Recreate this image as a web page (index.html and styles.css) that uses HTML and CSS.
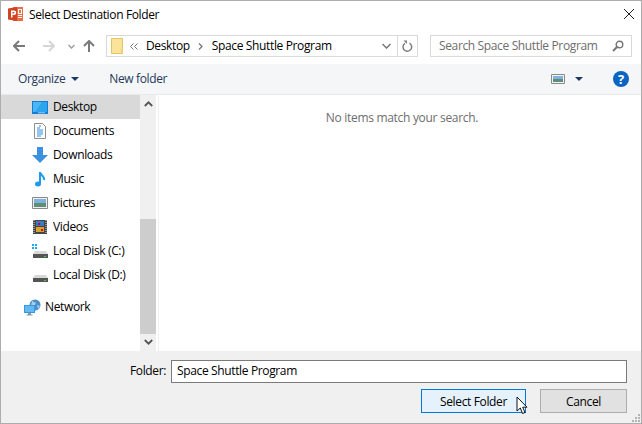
FILE: index.html
```html
<!DOCTYPE html>
<html lang="en">
<head>
<meta charset="utf-8">
<title>Select Destination Folder</title>
<link rel="stylesheet" href="styles.css">
</head>
<body>
<div class="window">
  <header class="titlebar">
    <svg class="app-icon" width="16" height="16" viewBox="0 0 16 16"><path fill="#ed6c47" d="M5 1h10v14H5z"/><path fill="#fff" d="M10 3h4v5h-4zM10 9h4v1h-4zM10 11h4v1h-4z"/><path fill="#ed6c47" d="M11 4h2v3h-2z"/><path fill="#d04423" d="M0 2.500 9 1v14L0 13.500z"/><path fill="#fff" d="M3 4.500h3a2 2 0 0 1 0 4.500H4.500v2.500H3zM4.500 6v1.600H5.600a.8.8 0 0 0 0-1.600z"/></svg>
    <span class="title-text">Select Destination Folder</span>
    <svg class="close" width="10" height="10" viewBox="0 0 10 10"><path d="M0 0l10 10M10 0L0 10" stroke="#222" stroke-width="1" fill="none"/></svg>
  </header>
  <nav class="navbar">
    <div class="nav-buttons">
      <svg width="12" height="12" viewBox="0 0 12 12" class="nav-back"><path d="M6 1L1 6l5 5M1 6h11" stroke="#7a7a7a" stroke-width="2" fill="none"/></svg>
      <svg width="12" height="12" viewBox="0 0 12 12" class="nav-fwd"><path d="M6 1l5 5-5 5M11 6H0" stroke="#d6d6d6" stroke-width="2" fill="none"/></svg>
      <svg width="7" height="5" viewBox="0 0 7 5" class="nav-drop"><path d="M.5 1l3 3 3-3" stroke="#a0a0a0" stroke-width="1.500" fill="none"/></svg>
      <svg width="12" height="12" viewBox="0 0 12 12" class="nav-up"><path d="M1 6l5-5 5 5M6 1v11" stroke="#7a7a7a" stroke-width="2" fill="none"/></svg>
    </div>
    <div class="address">
      <svg class="addr-folder" width="13" height="16" viewBox="0 0 13 16"><path fill="#fbe49a" stroke="#e3c465" d="M.5.500h11v15H.5z"/><path fill="#f2cf6f" d="M10 11h2v4h-2z"/></svg>
      <svg class="crumb-more" width="8" height="7" viewBox="0 0 8 7"><path d="M3.500.5l-3 3 3 3M7.500.5l-3 3 3 3" stroke="#777" stroke-width="1" fill="none"/></svg>
      <span class="crumb">Desktop</span>
      <svg class="crumb-sep" width="5" height="7" viewBox="0 0 5 7"><path d="M1 .5l3 3-3 3" stroke="#777" stroke-width="1.300" fill="none"/></svg>
      <span class="crumb">Space Shuttle Program</span>
      <svg class="addr-drop" width="9" height="6" viewBox="0 0 9 6"><path d="M.5 1l4 4 4-4" stroke="#777" stroke-width="1.500" fill="none"/></svg>
      <span class="addr-refresh">
        <svg width="11" height="12" viewBox="0 0 11 12"><path d="M7.500 3.200A4.300 4.300 0 1 1 3 3.300" stroke="#7d7d7d" stroke-width="1.500" fill="none"/><path d="M1.500 .5h3.500v3.500z" fill="#7d7d7d"/></svg>
      </span>
    </div>
    <div class="search">
      <span class="search-text">Search Space Shuttle Program</span>
      <svg width="12" height="12" viewBox="0 0 12 12"><circle cx="7.500" cy="4.500" r="3.300" stroke="#777" stroke-width="1.400" fill="none"/><path d="M5 7l-4 4" stroke="#777" stroke-width="2" fill="none"/></svg>
    </div>
  </nav>
  <div class="toolbar">
    <span class="tool organize">Organize</span>
    <svg class="tool-caret" width="8" height="4" viewBox="0 0 8 4"><path d="M0 0h8L4 4z" fill="#1e395b"/></svg>
    <span class="tool newfolder">New folder</span>
    <svg class="view-icon" width="14" height="10" viewBox="0 0 14 10"><path fill="#f4f4f4" stroke="#8a8a8a" d="M.5.500h13v9H.5z"/><path fill="#7fb2dc" d="M2 2h10v3H2z"/><path fill="#5f8d78" d="M2 5h10v3H2z"/></svg>
    <svg class="view-caret" width="8" height="4" viewBox="0 0 8 4"><path d="M0 0h8L4 4z" fill="#1e395b"/></svg>
    <span class="help">?</span>
  </div>
  <main class="main">
    <aside class="tree">
      <div class="tree-row selected">
        <svg width="16" height="13" viewBox="0 0 16 13"><path fill="#0f7fd8" d="M0 0h16v13H0z"/><path fill="#2da4f0" d="M1 1h14v10H1z"/><path fill="#4cb6f5" d="M1 1h9L3 11H1z"/><path fill="#e8f4fd" d="M6 11.500h7v.7H6z"/></svg>
        <span>Desktop</span>
      </div>
      <div class="tree-row">
        <svg width="16" height="16" viewBox="0 0 16 16"><path fill="#fdfdfd" stroke="#8f8f8f" d="M2.500.5h8l3 3v12h-11z"/><path stroke="#2f8fe0" d="M7 3h2M5 5h3M5 7h6M5 9h6M5 11h6M5 13h4" fill="none"/></svg>
        <span>Documents</span>
      </div>
      <div class="tree-row">
        <svg width="16" height="16" viewBox="0 0 16 16"><path fill="#3d8fe0" d="M5 0h6v8h5l-8 8-8-8h5z"/></svg>
        <span>Downloads</span>
      </div>
      <div class="tree-row">
        <svg width="16" height="16" viewBox="0 0 16 16"><ellipse cx="6" cy="13" rx="3" ry="2.500" fill="#1f9bee"/><path d="M8 13V1c0 3 5 4 4 8" stroke="#1f9bee" stroke-width="2" fill="none"/></svg>
        <span>Music</span>
      </div>
      <div class="tree-row">
        <svg width="16" height="12" viewBox="0 0 16 12"><path fill="#eee" stroke="#8a8a8a" d="M.5.500h15v11H.5z"/><path fill="#7fb2dc" d="M2 2h12v4H2z"/><path fill="#5f8d78" d="M2 6h12v4H2z"/></svg>
        <span>Pictures</span>
      </div>
      <div class="tree-row">
        <svg width="16" height="16" viewBox="0 0 16 16"><path fill="#444" d="M1 1h14v14H1z"/><path fill="#3a78c8" d="M4 2h8v5H4z"/><path fill="#d8a528" d="M4 8h8v5H4z"/><path fill="#c03" d="M6 4h2v2H6zM9 10h2v2H9z"/><path stroke="#ddd" stroke-dasharray="1 1" d="M2 1v14M14 1v14" fill="none"/></svg>
        <span>Videos</span>
      </div>
      <div class="tree-row">
        <svg width="16" height="16" viewBox="0 0 16 16"><path fill="#1fa9ee" d="M0 1h2v2H0zM3 1h2v2H3zM0 4h2v2H0zM3 4h2v2H3z"/><path fill="#d8d8d8" d="M3 8h11l2 3H1z"/><path fill="#555" d="M1 11h15v4H1z"/><path fill="#3fd04c" d="M12 13h2v1h-2z"/></svg>
        <span>Local Disk (C:)</span>
      </div>
      <div class="tree-row">
        <svg width="16" height="16" viewBox="0 0 16 16"><path fill="#d8d8d8" d="M3 8h11l2 3H1z"/><path fill="#555" d="M1 11h15v4H1z"/><path fill="#3fd04c" d="M12 13h2v1h-2z"/></svg>
        <span>Local Disk (D:)</span>
      </div>
      <div class="tree-row network">
        <svg width="17" height="17" viewBox="0 0 17 17"><circle cx="11" cy="6" r="5.500" fill="#4d8ec7"/><path d="M8 2l4 2-2 4-3-1zM13 6l3 1-2 3z" fill="#a7cde8"/><path fill="#2e9be6" d="M0 6h11v8H0z"/><path fill="#9fd6f7" d="M1 7h9v6H1z" opacity=".5"/><path fill="#8a9aa5" d="M4 14h3v1.500H4zM2.500 15.500h6v1h-6z"/></svg>
        <span>Network</span>
      </div>
    </aside>
    <div class="scrollbar">
      <svg class="scroll-up" width="9" height="6" viewBox="0 0 9 6"><path d="M.8 5l3.700-3.700L8.200 5" stroke="#555" stroke-width="1.800" fill="none"/></svg>
      <div class="scroll-gap"></div>
      <div class="scroll-thumb"></div>
      <svg class="scroll-down" width="9" height="6" viewBox="0 0 9 6"><path d="M.8 1l3.700 3.700L8.200 1" stroke="#555" stroke-width="1.800" fill="none"/></svg>
    </div>
    <section class="list">No items match your search.</section>
  </main>
  <footer class="footer">
    <div class="folder-row">
      <label class="folder-label" for="folder">Folder:</label>
      <input class="folder-input" id="folder" type="text" value="Space Shuttle Program">
    </div>
    <div class="button-row">
      <button class="btn primary" type="button">Select Folder</button>
      <button class="btn secondary" type="button">Cancel</button>
    </div>
    <svg class="cursor" width="13" height="20" viewBox="0 0 13 20"><path d="M1 1v14l3.300-3 2.200 5.500 2.500-1-2.300-5.300H11z" fill="#fff" stroke="#111" stroke-width="1"/></svg>
    <svg class="grip" width="8" height="8" viewBox="0 0 8 8"><path fill="#b4b4b4" d="M6 0h2v2H6zM3 3h2v2H3zM6 3h2v2H6zM0 6h2v2H0zM3 6h2v2H3zM6 6h2v2H6z"/></svg>
  </footer>
</div>
</body>
</html>
```

FILE: styles.css
```css
* { box-sizing: border-box; }
html, body { margin: 0; padding: 0; }
body { width: 642px; height: 424px; overflow: hidden; font-family: "Open Sans", "Noto Sans", sans-serif; font-size: 12px; letter-spacing: -0.36px; color: #000; background: #fff; }

.window { width: 642px; height: 424px; border: 1px solid #adadad; display: flex; flex-direction: column; position: relative; background: #fff; }

.titlebar { height: 34px; display: flex; align-items: center; padding: 0 7px; flex: none; }
.app-icon { margin-right: 5px; margin-top: -8px; }
.title-text { margin-top: -8px; }
.close { margin-left: auto; margin-top: -8px; margin-right: 0; }

.navbar { height: 29px; flex: none; display: flex; align-items: flex-start; }
.nav-buttons { width: 105px; height: 22px; display: flex; align-items: center; flex: none; }
.nav-back { margin-left: 12px; }
.nav-fwd { margin-left: 18px; }
.nav-drop { margin-left: 13px; }
.nav-up { margin-left: 8px; }

.address { width: 312px; height: 22px; border: 1px solid #d9d9d9; display: flex; align-items: center; flex: none; }
.addr-folder { margin-left: 4px; }
.crumb-more { margin-left: 6px; margin-right: 8px; }
.crumb { margin-top: -2px; }
.crumb-sep { margin: 0 9px 0 8px; }
.addr-drop { margin-left: auto; margin-right: 6px; }
.addr-refresh { width: 20px; height: 20px; border-left: 1px solid #d9d9d9; display: flex; align-items: center; justify-content: center; }

.search { width: 202px; height: 22px; margin-left: 12px; border: 1px solid #d9d9d9; display: flex; align-items: center; justify-content: space-between; padding: 0 7px 0 8px; color: #6d6d6d; flex: none; }
.search-text { margin-top: -2px; }

.toolbar { height: 31px; flex: none; display: flex; align-items: center; background: #f5f6f7; border-bottom: 1px solid #e8e9ea; color: #1e395b; }
.tool { margin-top: -2px; }
.organize { margin-left: 17px; }
.tool-caret { margin-left: 6px; }
.newfolder { margin-left: 30px; }
.view-icon { margin-left: auto; }
.view-caret { margin-left: 10px; }
.help { width: 16px; height: 16px; border-radius: 50%; background: #0a64c2; color: #fff; font-weight: 700; font-size: 13px; line-height: 16px; text-align: center; margin-left: 30px; margin-right: 12px; letter-spacing: 0; }

.main { height: 256px; flex: none; display: flex; background: #fff; }
.tree { width: 139px; flex: none; }
.tree-row { height: 24px; display: flex; align-items: center; padding-left: 31px; position: relative; }
.tree-row svg { flex: none; }
.tree-row span { position: absolute; left: 52px; margin-top: -2px; }
.tree-row.selected { background: #d9d9d9; }
.tree-row.network { margin-top: 8px; padding-left: 23px; }
.tree-row.network span { left: 44px; }

.scrollbar { width: 16px; flex: none; background: #f0f0f0; display: flex; flex-direction: column; align-items: center; }
.scroll-up { margin-top: 6px; margin-bottom: 0; flex: none; }
.scroll-gap { height: 112px; flex: none; }
.scroll-thumb { width: 16px; height: 115px; background: #cdcdcd; flex: none; }
.scroll-down { margin-top: 5px; flex: none; }

.list { flex: 1; margin-left: 2px; border-left: 1px solid #f0f0f0; text-align: center; padding: 14px 0 0 4px; color: #6d6d6d; letter-spacing: -0.3px; }

.footer { flex: 1; background: #f0f0f0; position: relative; }
.folder-row { display: flex; align-items: center; padding-top: 9px; }
.folder-label { width: 165px; text-align: right; margin-right: 5px; margin-top: -2px; color: #000; }
.folder-input { width: 456px; height: 23px; border: 1px solid #7a7a7a; background: #fff; font: inherit; letter-spacing: inherit; color: #000; padding: 0 5px 2px; outline: none; }
.button-row { display: flex; margin-top: 6px; padding-left: 420px; }
.btn { height: 24px; font: inherit; letter-spacing: inherit; color: #000; padding: 0; }
.btn.primary { width: 105px; background: #e5f1fb; border: 1px solid #0078d7; }
.btn.secondary { width: 87px; margin-left: 14px; background: #e1e1e1; border: 1px solid #adadad; }
.cursor { position: absolute; left: 515px; top: 45px; }
.grip { position: absolute; right: 1px; bottom: 1px; }
```
